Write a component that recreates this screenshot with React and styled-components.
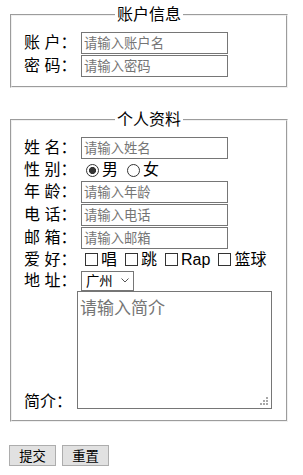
import React from 'react';
import styled, { createGlobalStyle } from 'styled-components';

const FONT = '"Liberation Sans", "Noto Sans CJK SC", sans-serif';

const Global = createGlobalStyle`
  html, body { margin: 0; padding: 0; background: #fff; }
  body { font-family: ${FONT}; font-size: 16px; color: #000; }
`;

const Page = styled.div`
  padding: 8px 0 8px 8px;
  display: flex;
  flex-direction: column;
  align-items: flex-start;
`;

const Fieldset = styled.fieldset`
  box-sizing: border-box;
  width: 278px;
  min-inline-size: 0;
  margin: ${p => p.$mt || 0}px 0 0 2px;
  padding: 9px 12px ${p => p.$pb}px;
  border: 2px groove #f0f0f0;
`;

const Legend = styled.legend`
  margin-left: auto;
  margin-right: auto;
  padding: 0 2px;
  font-size: 16px;
  line-height: 14px;
`;

const Row = styled.div`
  display: flex;
  align-items: ${p => (p.$end ? 'flex-end' : 'center')};
  height: ${p => p.$h || 23}px;
`;

const Label = styled.span`
  flex: none;
  width: ${p => p.$w || 57}px;
  line-height: 16px;
  white-space: pre;
`;

const TextInput = styled.input`
  box-sizing: border-box;
  width: 147px;
  height: 22px;
  margin: 1px 0 0;
  padding: 1px 2px;
  border: 1px solid #767676;
  border-radius: 0;
  font: 13.33px ${FONT};
  color: #000;
  outline: none;
  &::placeholder { color: #757575; }
`;

const Choice = styled.label`
  display: inline-flex;
  align-items: center;
  margin-right: 4px;
  line-height: 16px;
  white-space: nowrap;
`;

const Radio = styled.input.attrs({ type: 'radio' })`
  appearance: none;
  box-sizing: border-box;
  width: 13px;
  height: 13px;
  margin: 1px 3px 0 5px;
  border: 1px solid #333;
  border-radius: 50%;
  background: #fff;
  &:checked {
    background: radial-gradient(circle, #333 0 3.3px, #fff 3.8px);
  }
`;

const Checkbox = styled.input.attrs({ type: 'checkbox' })`
  appearance: none;
  box-sizing: border-box;
  width: 13px;
  height: 13px;
  margin: 0 3px 0 4px;
  border: 1px solid #333;
  border-radius: 0;
  background: #fff;
`;

const SelectWrap = styled.span`
  position: relative;
  display: inline-flex;
  margin-top: 1px;
`;

const Select = styled.select`
  appearance: none;
  box-sizing: border-box;
  width: 53px;
  height: 20px;
  margin: 0;
  padding: 0 0 0 4px;
  border: 1px solid #767676;
  border-radius: 0;
  background: #fff;
  font: 13.33px ${FONT};
  color: #000;
  outline: none;
`;

const Chevron = styled.svg`
  position: absolute;
  right: 5px;
  top: 7px;
  pointer-events: none;
`;

const dot = 'linear-gradient(#a8a8a8, #a8a8a8)';

const TextArea = styled.textarea`
  box-sizing: border-box;
  width: 195px;
  height: 118px;
  margin: 0 0 1px;
  padding: 2px;
  border: 1px solid #767676;
  border-radius: 0;
  resize: none;
  outline: none;
  font: 17px ${FONT};
  color: #000;
  background-color: #fff;
  background-image: ${dot}, ${dot}, ${dot}, ${dot}, ${dot}, ${dot};
  background-size: 2px 2px;
  background-repeat: no-repeat;
  background-position:
    right 3px bottom 3px,
    right 6px bottom 3px,
    right 9px bottom 3px,
    right 3px bottom 6px,
    right 6px bottom 6px,
    right 3px bottom 9px;
  &::placeholder { color: #757575; }
`;

const Actions = styled.div`
  display: flex;
  gap: 6px;
  margin: 23px 0 0 1px;
`;

const Button = styled.button`
  box-sizing: border-box;
  width: 47px;
  height: 21px;
  margin: 0;
  padding: 0;
  border: 1px solid #adadad;
  border-radius: 0;
  background: #e1e1e1;
  font: 13.33px ${FONT};
  color: #000;
`;

const hobbies = ['唱', '跳', 'Rap', '篮球'];

export default function App() {
  return (
    <Page>
      <Global />
      <Fieldset $pb={9}>
        <Legend>账户信息</Legend>
        <Row>
          <Label>{'账 户：'}</Label>
          <TextInput placeholder="请输入账户名" />
        </Row>
        <Row>
          <Label>{'密 码：'}</Label>
          <TextInput type="password" placeholder="请输入密码" />
        </Row>
      </Fieldset>

      <Fieldset $mt={25} $pb={10}>
        <Legend>个人资料</Legend>
        <Row>
          <Label>{'姓 名：'}</Label>
          <TextInput placeholder="请输入姓名" />
        </Row>
        <Row $h={21}>
          <Label>{'性 别：'}</Label>
          <Choice><Radio name="sex" defaultChecked />男</Choice>
          <Choice><Radio name="sex" />女</Choice>
        </Row>
        <Row>
          <Label>{'年 龄：'}</Label>
          <TextInput placeholder="请输入年龄" />
        </Row>
        <Row>
          <Label>{'电 话：'}</Label>
          <TextInput placeholder="请输入电话" />
        </Row>
        <Row>
          <Label>{'邮 箱：'}</Label>
          <TextInput placeholder="请输入邮箱" />
        </Row>
        <Row $h={21}>
          <Label>{'爱 好：'}</Label>
          {hobbies.map(h => (
            <Choice key={h}><Checkbox />{h}</Choice>
          ))}
        </Row>
        <Row $h={21}>
          <Label>{'地 址：'}</Label>
          <SelectWrap>
            <Select defaultValue="广州">
              <option>广州</option>
              <option>深圳</option>
              <option>北京</option>
            </Select>
            <Chevron width="8" height="5" viewBox="0 0 8 5">
              <path d="M0.5 0.5 L4 4 L7.5 0.5" fill="none" stroke="#555" strokeWidth="1" />
            </Chevron>
          </SelectWrap>
        </Row>
        <Row $h={119} $end>
          <Label $w={53}>{'简介：'}</Label>
          <TextArea placeholder="请输入简介" />
        </Row>
      </Fieldset>

      <Actions>
        <Button type="submit">提交</Button>
        <Button type="reset">重置</Button>
      </Actions>
    </Page>
  );
}
